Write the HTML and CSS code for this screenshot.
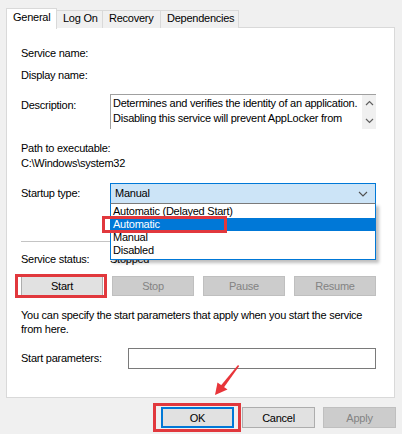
FILE: index.html
```html
<!DOCTYPE html>
<html lang="en">
<head>
  <meta charset="UTF-8" />
  <title>Service Properties</title>
  <link rel="stylesheet" href="styles.css">
</head>
<body>

<div class="dialog">
  <!-- tabs -->
  <div class="tabs">
    <div class="tab active">General</div>
    <div class="tab">Log On</div>
    <div class="tab">Recovery</div>
    <div class="tab">Dependencies</div>
  </div>

  <!-- general page -->
  <div class="panel">
    <div class="row first">
      <span class="label">Service name:</span>
    </div>
    <div class="row r2">
      <span class="label">Display name:</span>
    </div>
    <div class="row r3">
      <span class="label top">Description:</span>
      <div class="desc">
        <div class="desc-text">Determines and verifies the identity of an application.<br>Disabling this service will prevent AppLocker from</div>
        <div class="scroll">
          <svg width="9" height="6" viewBox="0 0 9 6"><path d="M1 5 L4.5 1.5 L8 5" fill="none" stroke="#606060" stroke-width="1.2"/></svg>
          <svg width="9" height="6" viewBox="0 0 9 6"><path d="M1 1 L4.5 4.5 L8 1" fill="none" stroke="#606060" stroke-width="1.2"/></svg>
        </div>
      </div>
    </div>
    <div class="line r4">Path to executable:</div>
    <div class="line">C:\Windows\system32</div>

    <div class="row r6">
      <span class="label">Startup type:</span>
      <div class="select-wrap">
        <div class="select">
          <span>Manual</span>
          <svg width="10" height="6" viewBox="0 0 10 6"><path d="M1 1 L5 5 L9 1" fill="none" stroke="#505050" stroke-width="1.1"/></svg>
        </div>
        <ul class="options">
          <li>Automatic (Delayed Start)</li>
          <li class="picked">Automatic</li>
          <li>Manual</li>
          <li>Disabled</li>
        </ul>
        <div class="mark mark-auto"></div>
      </div>
    </div>

    <div class="sep"></div>

    <div class="row r7">
      <span class="label">Service status:</span>
      <span>Stopped</span>
    </div>

    <div class="btn-row">
      <div class="btn-wrap">
        <button class="btn">Start</button>
        <div class="mark mark-start"></div>
      </div>
      <button class="btn" disabled>Stop</button>
      <button class="btn" disabled>Pause</button>
      <button class="btn" disabled>Resume</button>
    </div>

    <p class="hint">You can specify the start parameters that apply when you start the service<br>from here.</p>

    <div class="row r9">
      <span class="label wide">Start parameters:</span>
      <div class="param"></div>
    </div>
  </div>

  <!-- dialog buttons -->
  <div class="actions">
    <div class="btn-wrap">
      <button class="btn dlg focus">OK</button>
      <div class="mark mark-ok"></div>
    </div>
    <button class="btn dlg">Cancel</button>
    <button class="btn dlg" disabled>Apply</button>
  </div>

  <svg class="arrow" width="30" height="34" viewBox="0 0 30 34">
    <polygon points="25,1 26.2,2 10.5,24 7.5,22" fill="#e8353a"/>
    <polygon points="2,31 4.5,18.5 14.5,25.5" fill="#e8353a"/>
  </svg>
</div>

</body>
</html>
```
FILE: styles.css
```css
body {
  margin: 0;
  background: #f0f0f0;
  font-family: "Segoe UI", "Liberation Sans", sans-serif;
  font-size: 11px;
  letter-spacing: -0.25px;
  color: #000;
}
.dialog {
  position: relative;
  width: 402px;
  height: 434px;
  overflow: hidden;
}
.tabs {
  display: flex;
  padding: 10px 0 0 7px;
  height: 17px;
}
.tab {
  line-height: 15px;
  padding: 0 0 0 6px;
  border: 1px solid #d9d9d9;
  border-bottom: none;
  margin-left: -1px;
  background: #f0f0f0;
  box-sizing: border-box;
  height: 18px;
  white-space: nowrap;
}
.tab:nth-child(1) { width: 51px; }
.tab:nth-child(2) { width: 47px; }
.tab:nth-child(3) { width: 59px; }
.tab:nth-child(4) { width: 79px; }
.tab.active {
  background: #fff;
  height: 21px;
  margin-top: -2px;
  position: relative;
  z-index: 1;
  padding-top: 1px;
}
.panel {
  margin: 0 7px 0 6px;
  border: 1px solid #d9d9d9;
  background: #fff;
  padding: 18px 0 27px 14px;
  height: 371px;
  box-sizing: border-box;
  white-space: nowrap;
}
.row {
  display: flex;
  align-items: center;
  line-height: 15px;
}
.label {
  width: 89px;
  flex: none;
}
.label.top {
  align-self: flex-start;
  padding-top: 4px;
}
.label.wide {
  width: 107px;
}
.r2 { margin-top: 7px; }
.r3 { margin-top: 11px; }
.line { line-height: 15px; }
.r4 { margin-top: 12px; }
.r6 { margin-top: 12px; }
.r7 { margin-top: 10px; }
.desc {
  display: flex;
  width: 266px;
  height: 35px;
  box-sizing: border-box;
  border-top: 1px solid #a0a0a0;
  border-left: 1px solid #a0a0a0;
}
.desc-text {
  flex: 1;
  padding: 1px 0 0 2px;
  overflow: hidden;
}
.scroll {
  width: 14px;
  background: #f0f0f0;
  display: flex;
  flex-direction: column;
  justify-content: space-between;
  align-items: center;
  padding: 5px 0 5px;
}
.select-wrap {
  position: relative;
}
.select {
  width: 266px;
  height: 21px;
  box-sizing: border-box;
  border: 1px solid #0078d7;
  background: #cce4f7;
  display: flex;
  align-items: center;
  justify-content: space-between;
  padding: 0 7px 0 4px;
}
.options {
  position: absolute;
  left: 0;
  top: 20px;
  margin: 0;
  padding: 0 0 2px;
  list-style: none;
  width: 266px;
  box-sizing: border-box;
  border: 1px solid #0078d7;
  border-top-color: #7a7a7a;
  background: #fff;
  box-shadow: 3px 3px 3px rgba(0, 0, 0, 0.25);
  z-index: 2;
  line-height: 13px;
}
.options li {
  padding-left: 2px;
  height: 13px;
}
.options li:first-child {
  margin-top: 1px;
}
.options .picked {
  background: #0078d7;
  color: #fff;
}
.mark {
  position: absolute;
  border: 3px solid #e1383d;
  box-sizing: border-box;
  z-index: 3;
}
.mark-auto {
  left: -8px;
  top: 33px;
  width: 125px;
  height: 17px;
}
.sep {
  margin-top: 37px;
  height: 1px;
  width: 355px;
  background: #c4c4c4;
}
.btn-row {
  display: grid;
  grid-template-columns: repeat(4, 82px);
  column-gap: 9px;
  margin-top: 9px;
}
.btn-wrap {
  position: relative;
}
.btn {
  font: inherit;
  letter-spacing: inherit;
  height: 20px;
  width: 100%;
  background: #e1e1e1;
  border: 1px solid #adadad;
  color: #000;
  padding: 0;
}
.btn:disabled {
  background: #cccccc;
  border-color: #bfbfbf;
  color: #838383;
}
.mark-start {
  left: -6px;
  top: -2px;
  width: 92px;
  height: 24px;
}
.hint {
  margin: 12px 0 0;
  line-height: 14px;
}
.r9 { margin-top: 12px; }
.param {
  width: 248px;
  height: 21px;
  box-sizing: border-box;
  border: 1px solid #7a7a7a;
}
.actions {
  display: flex;
  justify-content: flex-end;
  gap: 8px;
  padding: 9px 6px 0 0;
}
.btn.dlg {
  width: 73px;
  height: 21px;
}
.btn.focus {
  border: 2px solid #0078d7;
}
.mark-ok {
  left: -8px;
  top: -4px;
  width: 88px;
  height: 29px;
}
.arrow {
  position: absolute;
  left: 213px;
  top: 364px;
}
```
